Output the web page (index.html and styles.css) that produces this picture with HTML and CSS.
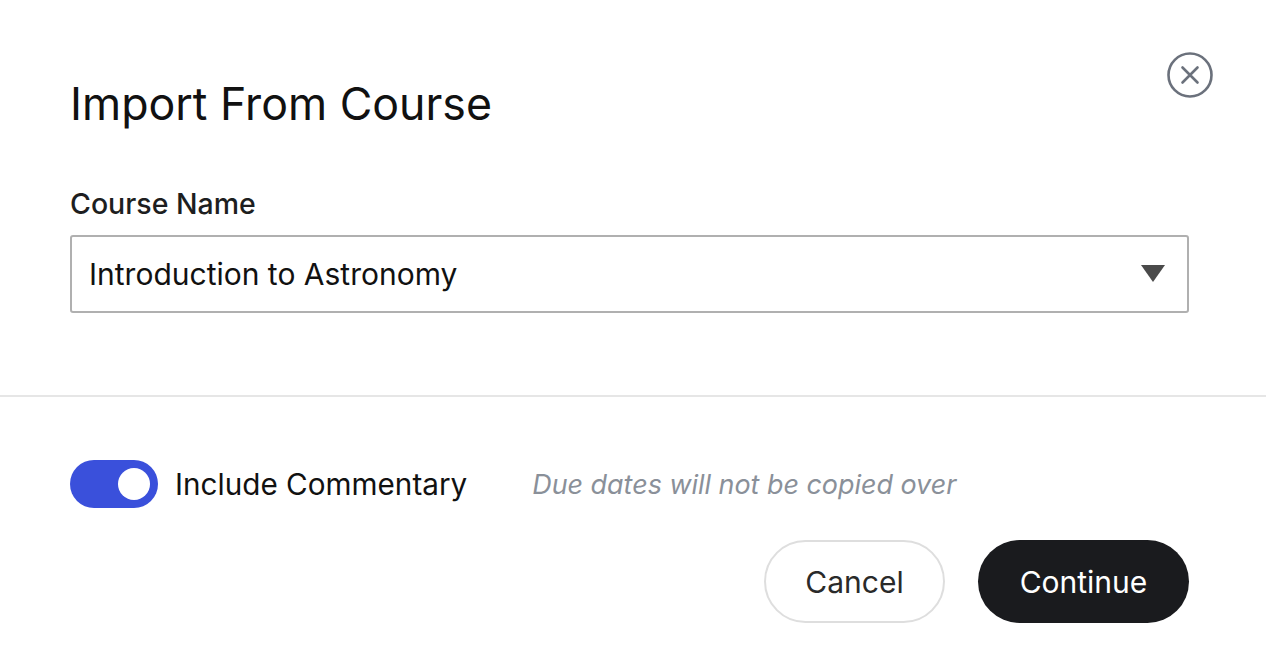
FILE: index.html
```html
<!DOCTYPE html>
<html>
<head>
<meta charset="utf-8">
<link rel="stylesheet" href="styles.css">
</head>
<body>
<div class="modal">
  <button class="close" aria-label="Close">
    <svg width="48" height="48" viewBox="0 0 48 48"><circle cx="24" cy="24" r="21.5" fill="none" stroke="#6b717c" stroke-width="2.6"/><path d="M16.5 16.5 L31.5 31.5 M31.5 16.5 L16.5 31.5" stroke="#6b717c" stroke-width="2.6" stroke-linecap="round"/></svg>
  </button>
  <div class="top">
    <h1 class="title">Import From Course</h1>
    <label class="label">Course Name</label>
    <div class="select">
      <span class="select-text">Introduction to Astronomy</span>
      <svg class="caret" width="24" height="18" viewBox="0 0 24 18"><path d="M0 0 H24 L12 17 Z" fill="#4a4a4a"/></svg>
    </div>
  </div>
  <div class="divider"></div>
  <div class="bottom">
    <div class="options">
      <div class="toggle"><div class="knob"></div></div>
      <span class="toggle-label">Include Commentary</span>
      <span class="note">Due dates will not be copied over</span>
    </div>
    <div class="actions">
      <button class="btn btn-cancel">Cancel</button>
      <button class="btn btn-continue">Continue</button>
    </div>
  </div>
</div>
</body>
</html>
```
FILE: styles.css
```css
* { box-sizing: border-box; }
html, body { margin: 0; padding: 0; background: #fff; }
body { font-family: Inter, "Noto Sans", sans-serif; color: #111; }
.modal { position: relative; width: 1266px; height: 664px; }
.close { position: absolute; left: 1166px; top: 51px; width: 48px; height: 48px; padding: 0; border: 0; background: none; }
.close svg { display: block; }
.top { padding: 74px 77px 0 70px; height: 395px; }
.title { margin: 0; font-size: 44.7px; font-weight: 400; line-height: 60px; letter-spacing: 0; color: #111; }
.label { display: block; margin-top: 52px; font-size: 28.5px; font-weight: 500; line-height: 36px; color: #1d1e20; }
.select { margin-top: 13px; height: 78px; border: 2px solid #b0b0b0; border-radius: 3px; display: flex; align-items: center; justify-content: space-between; padding: 0 22px 0 17px; }
.select-text { font-size: 30px; line-height: 36px; color: #111; }
.caret { display: block; }
.divider { height: 2px; background: #e6e6e6; }
.bottom { padding: 63px 77px 0 70px; }
.options { display: flex; align-items: center; height: 48px; }
.toggle { width: 88px; height: 48px; border-radius: 24px; background: #3a50db; position: relative; flex: none; }
.knob { position: absolute; left: 48px; top: 8px; width: 32px; height: 32px; border-radius: 50%; background: #fff; }
.toggle-label { margin-left: 17px; font-size: 29.7px; line-height: 36px; color: #111; }
.note { margin-left: 65px; font-size: 26.9px; font-style: italic; color: #8a9099; line-height: 36px; }
.actions { display: flex; justify-content: flex-end; gap: 33px; margin-top: 32px; }
.btn { height: 83px; border-radius: 42px; font-family: Inter, "Noto Sans", sans-serif; font-size: 30px; padding: 0; }
.btn-cancel { width: 181px; background: #fff; border: 2px solid #dedede; color: #2a2a2a; }
.btn-continue { width: 211px; background: #1a1b1e; border: 0; color: #fff; }
```
